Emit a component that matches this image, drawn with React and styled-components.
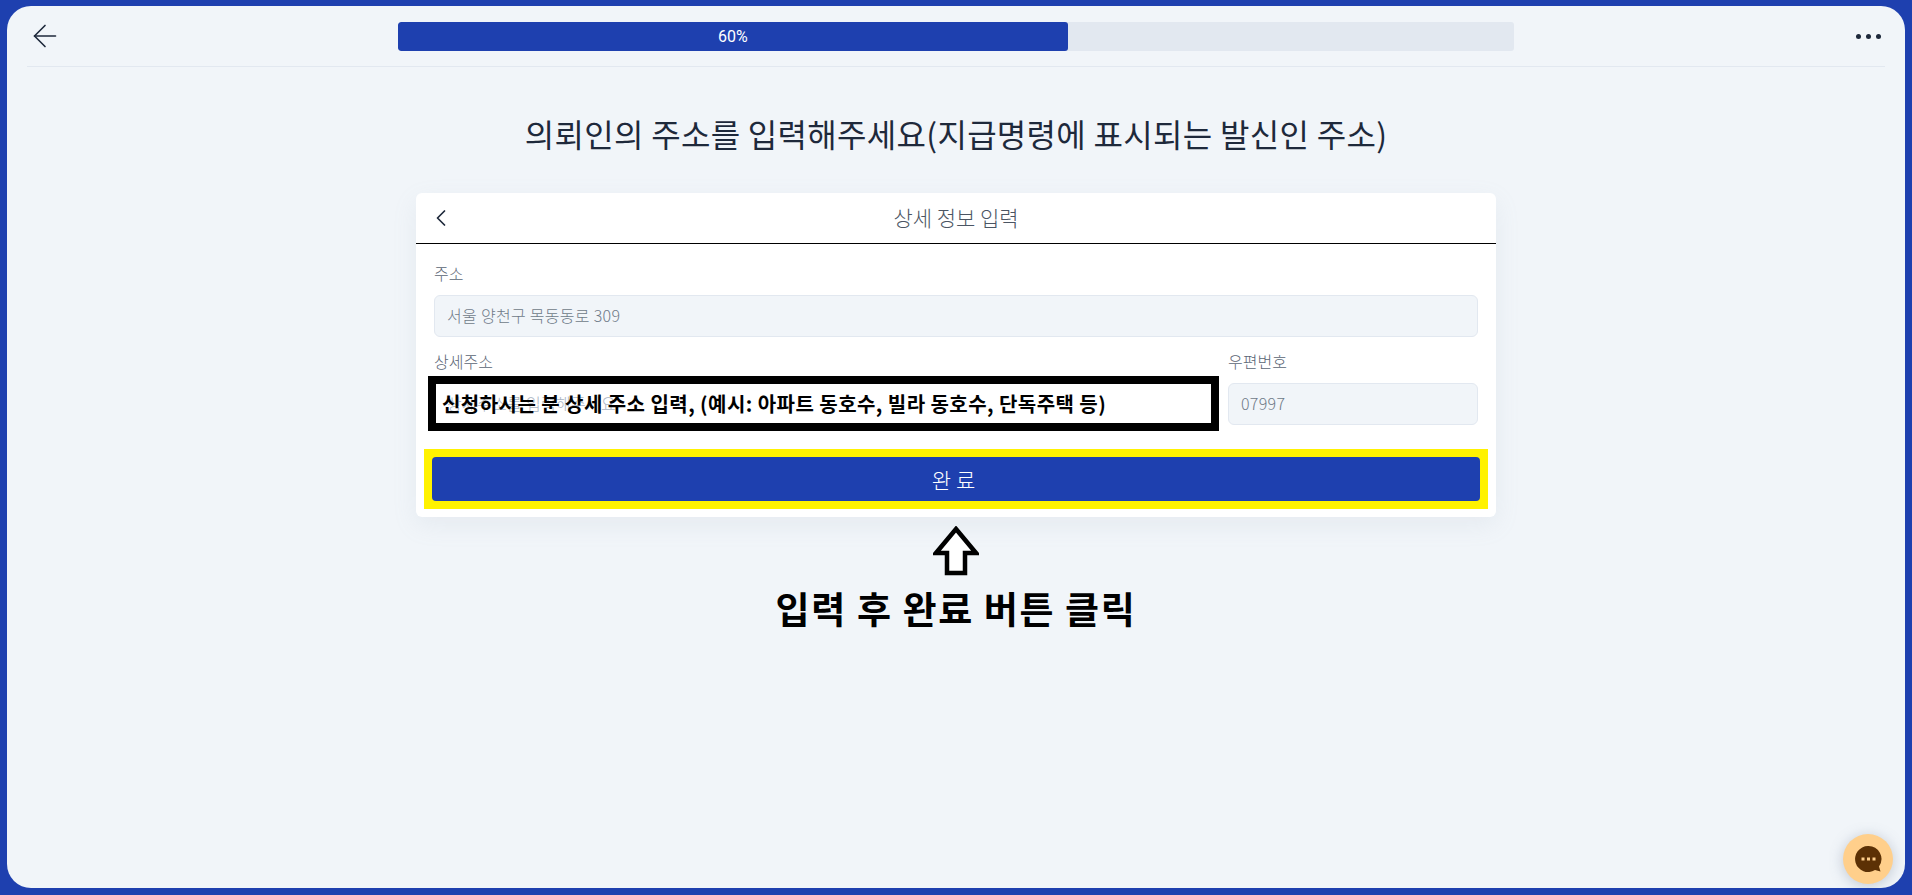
import styled, { createGlobalStyle } from "styled-components";
import { ArrowLeft, ChevronLeft } from "lucide-react";

const GlobalStyle = createGlobalStyle`
  html, body {
    margin: 0;
    padding: 0;
    background: #1e40af;
  }
  * {
    box-sizing: border-box;
  }
  body {
    font-family: "Noto Sans CJK KR", "Noto Sans", sans-serif;
  }
`;

const Frame = styled.div`
  position: relative;
  height: 882px;
  margin: 6px 7px 7px;
  border-radius: 24px;
  background: #f1f5f9;
  overflow: hidden;
`;

const Header = styled.header`
  display: grid;
  grid-template-columns: 1fr 1116px 1fr;
  align-items: center;
  height: 61px;
  margin: 0 20px;
  padding-top: 1px;
  border-bottom: 1px solid #e2e8f0;
`;

const BackButton = styled.button`
  display: flex;
  width: 36px;
  margin-top: -2px;
  padding: 0;
  border: 0;
  background: none;
  color: #1e293b;
`;

const MenuDots = styled.div`
  display: flex;
  justify-content: flex-end;
  gap: 5px;
  padding-right: 4px;

  span {
    width: 5px;
    height: 5px;
    border-radius: 50%;
    background: #1e293b;
  }
`;

const ProgressTrack = styled.div`
  height: 29px;
  border-radius: 3px;
  background: #e2e8f0;
  overflow: hidden;
`;

const ProgressFill = styled.div`
  display: flex;
  align-items: center;
  justify-content: center;
  height: 100%;
  border-radius: 3px;
  background: #1e40af;
  color: #fff;
  font-family: "Roboto", sans-serif;
  font-size: 16px;
`;

const Title = styled.h1`
  margin: 44px 0 38px;
  color: #1e293b;
  font-size: 32px;
  font-weight: 400;
  line-height: 44px;
  letter-spacing: 0.3px;
  text-align: center;
`;

const Card = styled.section`
  width: 1080px;
  margin: 0 auto;
  padding-bottom: 8px;
  border-radius: 6px;
  background: #fff;
  box-shadow: 0 8px 24px rgba(148, 163, 184, 0.12);
`;

const CardHeader = styled.div`
  display: grid;
  grid-template-columns: 50px 1fr 50px;
  align-items: center;
  height: 51px;
  border-bottom: 1px solid #000;
  color: #4b5563;
`;

const CardBack = styled.button`
  display: flex;
  padding: 0 0 0 11px;
  border: 0;
  background: none;
  color: #1e293b;
`;

const CardTitle = styled.h2`
  margin: 0 0 2px;
  font-size: 21px;
  font-weight: 300;
  text-align: center;
`;

const Form = styled.div`
  padding: 17px 18px 0;
`;

const FieldRow = styled.div`
  display: flex;
  gap: 17px;
  margin-top: 12px;
`;

const Field = styled.label`
  position: relative;
  display: block;
  flex: ${(props) => (props.$fixed ? "0 0 250px" : "1")};
`;

const Label = styled.span`
  display: block;
  height: 24px;
  margin-bottom: 10px;
  color: #5b6675;
  font-size: 16px;
  font-weight: 300;
  line-height: 24px;
`;

const Input = styled.input`
  display: block;
  width: 100%;
  height: 42px;
  padding: 0 12px 2px;
  border: 1px solid ${(props) => (props.$plain ? "#fff" : "#e2e8f0")};
  border-radius: 6px;
  outline: 0;
  background: ${(props) => (props.$plain ? "#fff" : "#f1f5f9")};
  color: #6f7a88;
  font-family: inherit;
  font-size: 16px;
  font-weight: 300;
  letter-spacing: 0.3px;

  &::placeholder {
    color: #a8b3c2;
  }
`;

const Callout = styled.div`
  position: absolute;
  top: 27px;
  left: -6px;
  right: -8px;
  display: flex;
  align-items: center;
  height: 55px;
  padding-left: 6px;
  border: 8px solid #000;
  color: #000;
  font-size: 20px;
  font-weight: 700;
  letter-spacing: 0.45px;
  white-space: nowrap;
`;

const HighlightBox = styled.div`
  margin: 24px -10px 0;
  padding: 8px;
  background: #fff200;
`;

const SubmitButton = styled.button`
  display: block;
  width: 100%;
  height: 44px;
  border: 0;
  border-radius: 4px;
  background: #1e40af;
  color: #fff;
  font-family: inherit;
  font-size: 21px;
  font-weight: 300;
  letter-spacing: 5px;
`;

const Hint = styled.div`
  display: flex;
  flex-direction: column;
  align-items: center;
  margin-top: 9px;
`;

const HintText = styled.p`
  margin: 7px 0 0;
  color: #000;
  font-size: 37px;
  font-weight: 700;
  line-height: 50px;
  letter-spacing: 1.6px;
`;

const ChatButton = styled.button`
  position: absolute;
  right: 12px;
  bottom: 4px;
  display: flex;
  align-items: center;
  justify-content: center;
  width: 50px;
  height: 50px;
  padding: 0;
  border: 0;
  border-radius: 50%;
  background: #ffcf8b;
  box-shadow: 0 2px 14px rgba(100, 116, 139, 0.35);
`;

function UpArrow() {
  return (
    <svg width="46" height="50" viewBox="0 0 46 50" fill="none">
      <path
        d="M23 3 L43 27 H32 V47 H14 V27 H3 Z"
        fill="#fff"
        stroke="#000"
        strokeWidth="4.5"
        strokeLinejoin="miter"
      />
    </svg>
  );
}

function ChatIcon() {
  return (
    <svg width="28" height="28" viewBox="0 0 28 28">
      <path d="M14 1a13 13 0 1 0 7 24l5.500 1.500-1.500-5A13 13 0 0 0 14 1z" fill="#5c3105" />
      <rect x="7.500" y="12.500" width="3" height="3" fill="#ffcf8b" />
      <rect x="13" y="12.500" width="3" height="3" fill="#ffcf8b" />
      <rect x="18.500" y="12.500" width="3" height="3" fill="#ffcf8b" />
    </svg>
  );
}

export default function App() {
  return (
    <>
      <GlobalStyle />
      <Frame>
        <Header>
          <BackButton type="button" aria-label="뒤로">
            <ArrowLeft size={42} strokeWidth={1.1} />
          </BackButton>
          <ProgressTrack>
            <ProgressFill style={{ width: "60%" }}>60%</ProgressFill>
          </ProgressTrack>
          <MenuDots>
            <span />
            <span />
            <span />
          </MenuDots>
        </Header>

        <Title>의뢰인의 주소를 입력해주세요(지급명령에 표시되는 발신인 주소)</Title>

        <Card>
          <CardHeader>
            <CardBack type="button" aria-label="이전">
              <ChevronLeft size={28} strokeWidth={1.5} />
            </CardBack>
            <CardTitle>상세 정보 입력</CardTitle>
          </CardHeader>
          <Form>
            <Field>
              <Label>주소</Label>
              <Input readOnly value="서울 양천구 목동동로 309" />
            </Field>
            <FieldRow>
              <Field>
                <Label>상세주소</Label>
                <Input $plain placeholder="상세주소를 입력해주세요" />
                <Callout>신청하시는 분 상세 주소 입력, (예시: 아파트 동호수, 빌라 동호수, 단독주택 등)</Callout>
              </Field>
              <Field $fixed>
                <Label>우편번호</Label>
                <Input readOnly value="07997" />
              </Field>
            </FieldRow>
            <HighlightBox>
              <SubmitButton type="button">완료</SubmitButton>
            </HighlightBox>
          </Form>
        </Card>

        <Hint>
          <UpArrow />
          <HintText>입력 후 완료 버튼 클릭</HintText>
        </Hint>

        <ChatButton type="button" aria-label="채팅">
          <ChatIcon />
        </ChatButton>
      </Frame>
    </>
  );
}
